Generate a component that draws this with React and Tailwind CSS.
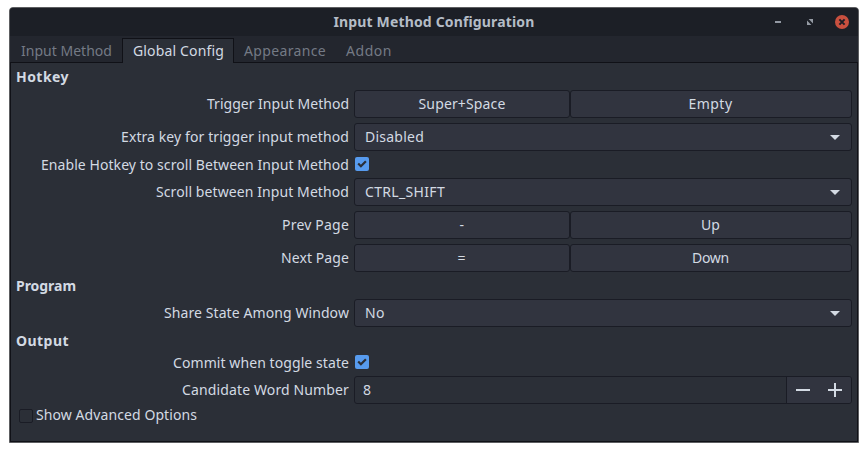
import { useLayoutEffect, useRef, useState } from "react";

// Text set to a given advance width by spreading the difference over its letters.
function Label({ children, width, className = "" }) {
  const ref = useRef(null);
  const [spacing, setSpacing] = useState(0);
  useLayoutEffect(() => {
    const natural = ref.current.getBoundingClientRect().width - spacing * children.length;
    setSpacing((width - natural) / children.length);
  }, [children, width]);
  return (
    <span ref={ref} className={`whitespace-pre ${className}`} style={{ letterSpacing: `${spacing}px` }}>
      {children}
    </span>
  );
}

function Heading({ children, width }) {
  return (
    <h2 className="flex h-[17px] items-center pl-[5px] text-[14px] font-bold">
      <Label width={width}>{children}</Label>
    </h2>
  );
}

function Row({ label, width, short, children }) {
  return (
    <div className={`flex items-center pr-[5px] ${short ? "h-[17px]" : "h-7"}`}>
      <div className={`flex w-[338px] shrink-0 justify-end ${short ? "" : "pb-px"}`}>
        <Label width={width}>{label}</Label>
      </div>
      <div className="ml-[5px] flex flex-1 items-center">{children}</div>
    </div>
  );
}

function KeyPair({ first, firstWidth, second, secondWidth }) {
  const box = "flex h-7 items-center justify-center rounded-[3px] border border-[#1a1c25] bg-[#31343f] pb-px";
  return (
    <>
      <button className={`${box} w-[216px]`}><Label width={firstWidth}>{first}</Label></button>
      <button className={`${box} flex-1 pr-px`}><Label width={secondWidth}>{second}</Label></button>
    </>
  );
}

function Combo({ value, width }) {
  return (
    <button className="flex h-7 flex-1 items-center justify-between rounded-[3px] border border-[#1a1c25] bg-[#31343f] pr-[11px] pb-px pl-[10px]">
      <Label width={width}>{value}</Label>
      <svg width="10" height="5" viewBox="0 0 10 5" className="mt-[2px]"><path d="M0 0h10L5 5z" fill="#d3dae3" /></svg>
    </button>
  );
}

function Check() {
  return (
    <svg width="14" height="14" viewBox="0 0 14 14" className="-mt-px ml-px">
      <rect width="14" height="14" rx="2" fill="#579bee" />
      <path d="M3.2 6.5l2.7 2.7 5-5" fill="none" stroke="#2b2f37" strokeWidth="2.2" />
    </svg>
  );
}

export default function App() {
  return (
    <div className="h-[452px] w-[868px] bg-white pt-[7px] pl-[9px] font-['Noto_Sans',sans-serif] text-[14px] leading-[17px] text-[#d3dae3]">
      <div className="flex h-[436px] w-[850px] flex-col overflow-hidden rounded-t-[4px] border border-[#5d5e61] bg-[#23262e]">
        <header className="flex h-7 items-center bg-[#1c1f26]">
          <div className="w-[98px]" />
          <h1 className="flex flex-1 justify-center pb-px text-[14px] font-bold text-[#b4bcc6]">
            <Label width={201}>Input Method Configuration</Label>
          </h1>
          <div className="flex w-[98px] items-center justify-end pr-[9px]">
            <svg width="75" height="14" viewBox="0 0 75 14">
              <path d="M1 6h6v2H1z" fill="#9399a3" />
              <path d="M34.6 4H39v4.4zM33 5.6V10h4.4z" fill="#959ba4" />
              <circle cx="68" cy="7" r="7" fill="#c9503f" />
              <path d="M65.4 4.4l5.2 5.2M70.6 4.4l-5.2 5.2" stroke="#1c1e26" strokeWidth="2" />
            </svg>
          </div>
        </header>

        <nav className="flex h-[27px] items-end border-[#101117] text-[#747a85] shadow-[inset_0_-1px_0_#101117]">
          <div className="flex h-[25px] w-[112px] items-center justify-center pl-px"><Label width={91}>Input Method</Label></div>
          <div className="flex h-[25px] w-[112px] items-center justify-center border-x border-t border-[#101117] bg-[#2b2f37] pb-px pl-px text-[#d3dae3]"><Label width={91}>Global Config</Label></div>
          <div className="flex h-[25px] items-center pl-[10px]"><Label width={82}>Appearance</Label></div>
          <div className="flex h-[25px] items-center pl-5"><Label width={46}>Addon</Label></div>
        </nav>

        <main className="flex flex-1 flex-col gap-[5px] border-x border-b border-[#101117] bg-[#2b2f37] pt-[5px]">
          <Heading width={53}>Hotkey</Heading>
          <Row label="Trigger Input Method" width={142}>
            <KeyPair first="Super+Space" firstWidth={87} second="Empty" secondWidth={44} />
          </Row>
          <Row label="Extra key for trigger input method" width={228}>
            <Combo value="Disabled" width={59} />
          </Row>
          <Row label="Enable Hotkey to scroll Between Input Method" width={308} short><Check /></Row>
          <Row label="Scroll between Input Method" width={193}>
            <Combo value="CTRL_SHIFT" width={80} />
          </Row>
          <Row label="Prev Page" width={67}>
            <KeyPair first="-" firstWidth={5} second="Up" secondWidth={19} />
          </Row>
          <Row label="Next Page" width={68}>
            <KeyPair first="=" firstWidth={9} second="Down" secondWidth={37} />
          </Row>
          <Heading width={60}>Program</Heading>
          <Row label="Share State Among Window" width={185}>
            <Combo value="No" width={20} />
          </Row>
          <Heading width={53}>Output</Heading>
          <Row label="Commit when toggle state" width={176} short><Check /></Row>
          <Row label="Candidate Word Number" width={167}>
            <div className="flex h-7 flex-1 overflow-hidden rounded-[3px] border border-[#1a1c25]">
              <div className="flex flex-1 items-center pb-px pl-2"><Label width={8}>8</Label></div>
              <div className="flex w-[65px] items-center justify-between border-l border-[#1a1c25] bg-[#31343f] pr-[9px] pl-[9px]">
                <svg width="14" height="14" viewBox="0 0 14 14"><path d="M0 6h14v2H0z" fill="#d3dae3" /></svg>
                <svg width="14" height="14" viewBox="0 0 14 14"><path d="M0 6h14v2H0zM6 0h2v14H6z" fill="#d3dae3" /></svg>
              </div>
            </div>
          </Row>
          <div className="-mt-[2px] flex h-[17px] items-center pl-2">
            <span className="h-[14px] w-[14px] rounded-[2px] border border-[#1a1c25]" />
            <Label width={161} className="-mt-[2px] ml-[3px]">Show Advanced Options</Label>
          </div>
        </main>
      </div>
    </div>
  );
}
